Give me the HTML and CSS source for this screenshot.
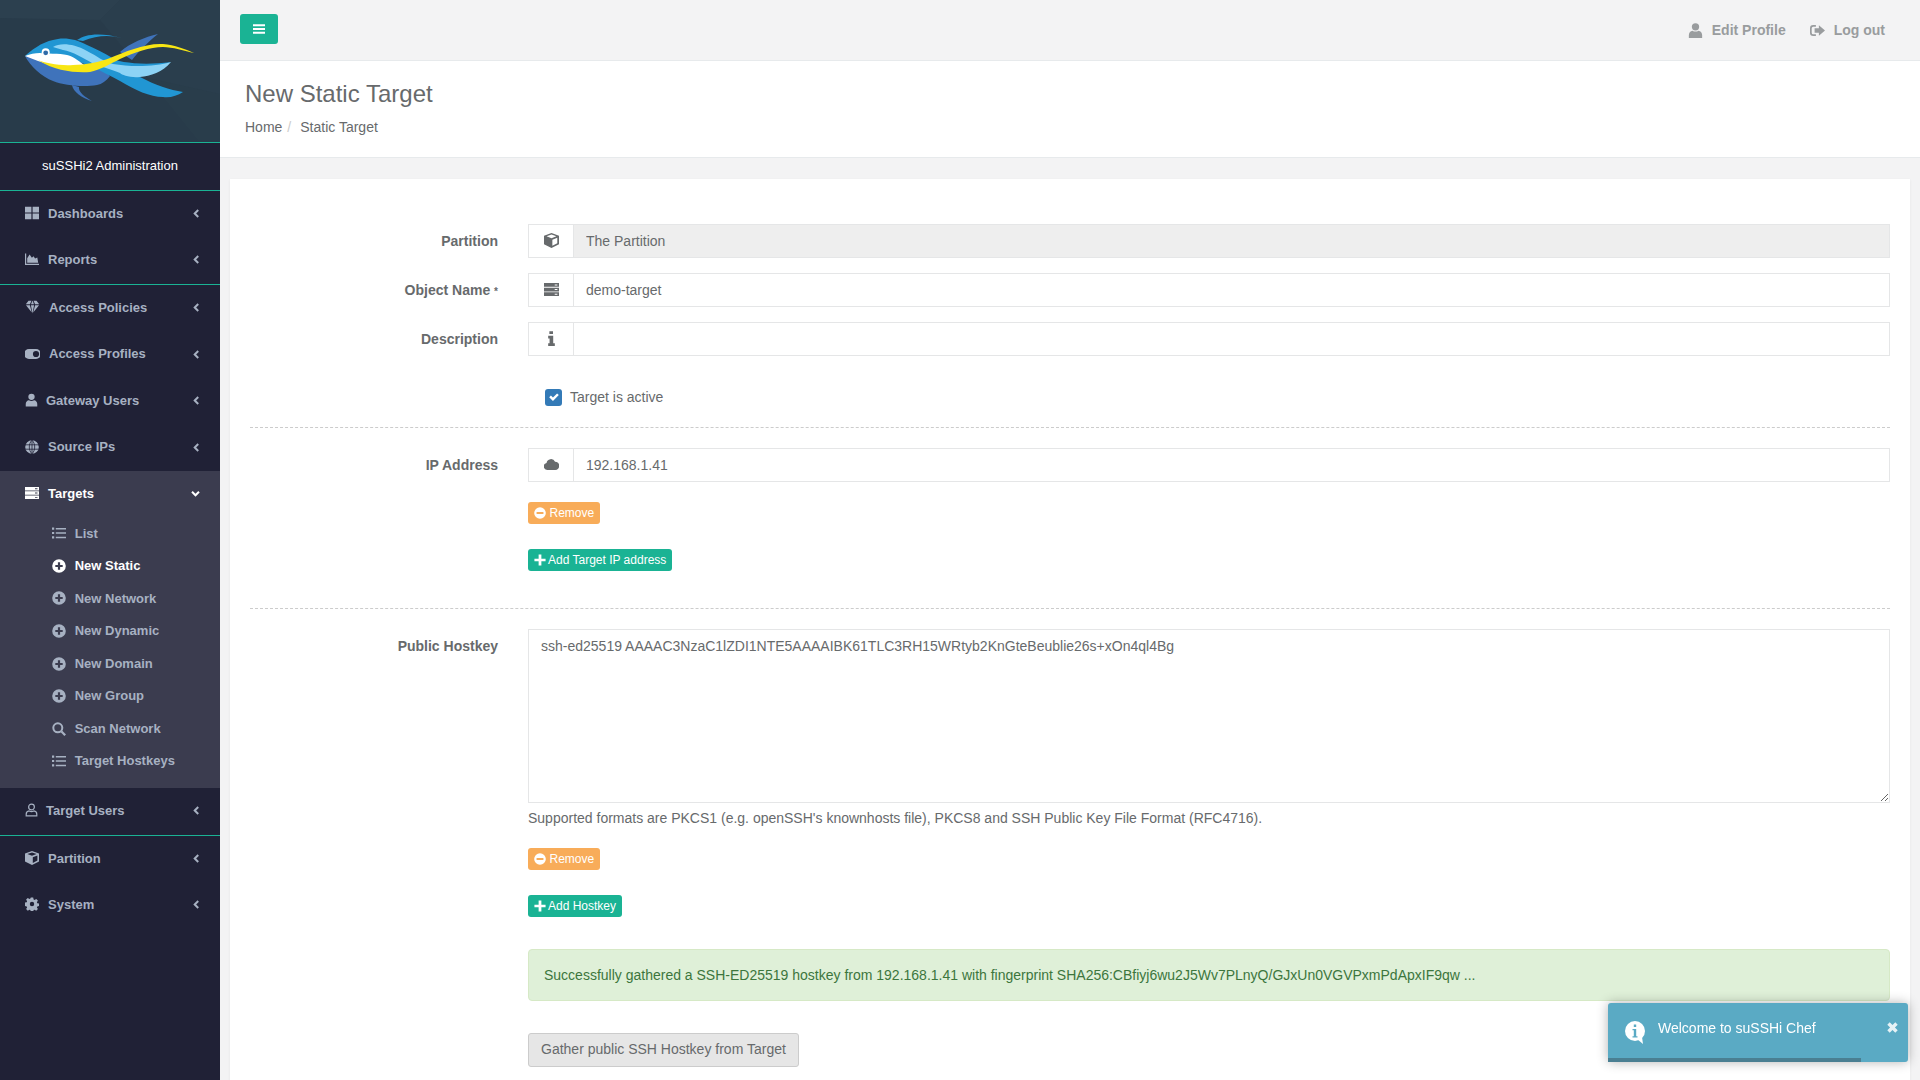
FILE: index.html
```html
<!DOCTYPE html>
<html lang="en">
<head>
    <meta charset="UTF-8">
    <title>New Static Target</title>
    <link rel="stylesheet" href="styles.css">
</head>
<body>
    <svg class="sprite" xmlns="http://www.w3.org/2000/svg">
        <symbol id="i-th" viewBox="0 0 14 14"><path d="M0 .8h6.400v5.800H0zM7.600 .8H14v5.800H7.600zM0 7.600h6.400v5.600H0zM7.600 7.600H14v5.600H7.600z"/></symbol>
        <symbol id="i-chart" viewBox="0 0 14 14"><path d="M0 1.500h1.200v10.300H14V13H0z"/><path d="M2.200 10.800V6.200L4.600 2.500l2.300 3.300 1.600-1.600 1.600 2.400 2.200-1.200.9 5.400z"/></symbol>
        <symbol id="i-diamond" viewBox="0 0 14 14"><path d="M3 .8h3L4.400 4.300H.3zM8 .8h3l2.700 3.500H9.600zM6.900 .8h.2l1.400 3.500h-3zM.5 5.200h3.900l1.900 7.400zM5.400 5.200h3.200L7 13.400zM9.600 5.200h3.900l-5.800 7.400z"/></symbol>
        <symbol id="i-toggle" viewBox="0 0 15 14"><path fill-rule="evenodd" d="M4 2h7a5 5 0 0 1 0 10H4A5 5 0 0 1 4 2zm7 1.900a3.100 3.100 0 1 0 0 6.200 3.100 3.100 0 0 0 0-6.200z"/></symbol>
        <symbol id="i-user" viewBox="0 0 14 14"><circle cx="7" cy="3.600" r="3.400"/><path d="M.8 14v-2.800C.8 9 2.400 7.400 4.200 7.200c1.700 1.100 3.900 1.100 5.600 0 1.800.2 3.400 1.800 3.400 4V14z"/></symbol>
        <symbol id="i-user-o" viewBox="0 0 14 14"><circle cx="7" cy="3.800" r="3.100" fill="none" stroke="currentColor" stroke-width="1.300"/><path d="M1.300 13.300v-1.700c0-2 1.500-3.400 3.200-3.600 1.500.8 3.500.8 5 0 1.700.2 3.200 1.600 3.200 3.600v1.700z" fill="none" stroke="currentColor" stroke-width="1.300"/></symbol>
        <symbol id="i-globe" viewBox="0 0 14 14"><path fill-rule="evenodd" d="M7 .2a6.800 6.800 0 1 1 0 13.600A6.800 6.800 0 0 1 7 .2z"/><path d="M7 .2v13.600M.2 4.800h13.600M.2 9.200h13.600M7 .2C3.400 3.700 3.400 10.300 7 13.800M7 .2c3.600 3.500 3.600 10.100 0 13.600" fill="none" stroke="#202136" stroke-width=".8"/></symbol>
        <symbol id="i-server" viewBox="0 0 14 14"><path fill-rule="evenodd" d="M0 1h14v3.500H0zM10 2.300v.9h2.500v-.9zM0 5.300h14v3.500H0zM10 6.600v.9h2.500v-.9zM0 9.600h14v3.500H0zM10 10.900v.9h2.500v-.9z"/></symbol>
        <symbol id="i-list" viewBox="0 0 14 14"><path d="M0 1.500h2.200v2.200H0zM0 5.900h2.200v2.200H0zM0 10.300h2.200v2.200H0zM3.800 1.900H14v1.500H3.800zM3.800 6.300H14v1.500H3.800zM3.800 10.700H14v1.500H3.800z"/></symbol>
        <symbol id="i-plus-c" viewBox="0 0 14 14"><path fill-rule="evenodd" d="M7 .2a6.800 6.800 0 1 1 0 13.600A6.800 6.800 0 0 1 7 .2zM5.900 3.300v2.600H3.300v2.200h2.600v2.600h2.200V8.100h2.600V5.900H8.100V3.300z"/></symbol>
        <symbol id="i-minus-c" viewBox="0 0 14 14"><path fill-rule="evenodd" d="M7 .2a6.800 6.800 0 1 1 0 13.600A6.800 6.800 0 0 1 7 .2zM3 5.900v2.200h8V5.900z"/></symbol>
        <symbol id="i-plus" viewBox="0 0 14 14"><path d="M5.400 .5h3.200v4.900h4.900v3.200H8.600v4.900H5.400V8.600H.5V5.400h4.900z"/></symbol>
        <symbol id="i-search" viewBox="0 0 14 14"><circle cx="5.800" cy="5.800" r="4.500" fill="none" stroke="currentColor" stroke-width="2"/><path d="M8.700 10.300l1.600-1.600 3.700 3.700-1.600 1.600z"/></symbol>
        <symbol id="i-cube" viewBox="0 0 14 14"><path fill-rule="evenodd" d="M7 0l7 2.500v8L7 14 0 10.500v-8zM2.400 3L7 4.800 11.600 3 7 1.400zM7.800 12l4.600-2.400V4.500L7.800 6.300z"/></symbol>
        <symbol id="i-cog" viewBox="0 0 14 14"><path fill-rule="evenodd" d="M5.800.6h2.400l.4 1.900 1 .4 1.600-1 1.700 1.700-1 1.600.4 1 1.900.4v2.400l-1.900.4-.4 1 1 1.600-1.700 1.700-1.600-1-1 .4-.4 1.900H5.800l-.4-1.900-1-.4-1.600 1-1.700-1.700 1-1.600-.4-1-1.900-.4V5.600l1.900-.4.4-1-1-1.600 1.700-1.700 1.600 1 1-.4zM7 4.800a2.200 2.200 0 1 0 0 4.400 2.200 2.200 0 0 0 0-4.400z"/></symbol>
        <symbol id="i-left" viewBox="0 0 8 12"><path d="M6 .4L7.900 2.300 4.200 6l3.700 3.700L6 11.600.4 6z"/></symbol>
        <symbol id="i-down" viewBox="0 0 12 8"><path d="M.4 2L2.300.1 6 3.800 9.700.1 11.600 2 6 7.600z"/></symbol>
        <symbol id="i-bars" viewBox="0 0 14 14"><path d="M1 2.300h12v1.900H1zM1 6.050h12v1.900H1zM1 9.800h12v1.900H1z"/></symbol>
        <symbol id="i-signout" viewBox="0 0 14 14"><path d="M5.500 1.800v1.700H3A1.400 1.400 0 0 0 1.600 4.900v4.200A1.400 1.400 0 0 0 3 10.500h2.500v1.700H3a3 3 0 0 1-3-3V4.800a3 3 0 0 1 3-3z"/><path d="M8.300 2L14 7l-5.700 5V9.200H4.300V4.800h4z"/></symbol>
        <symbol id="i-info" viewBox="0 0 14 14"><path d="M5 .3h3.400v2.600H5zM3.900 4.400h4.700v7.100h1.500V14H3.900v-2.500h1.300V6.900H3.900z"/></symbol>
        <symbol id="i-cloud" viewBox="0 0 16 14"><path d="M3.800 12.800A3.800 3.800 0 0 1 2.700 5.300 4.800 4.800 0 0 1 11.800 4 4.400 4.400 0 0 1 12 12.800z"/></symbol>
        <symbol id="i-check" viewBox="0 0 14 14"><path d="M1.400 7.200l2-2 2.400 2.400 4.800-4.800 2 2-6.800 6.800z"/></symbol>
        <symbol id="i-close" viewBox="0 0 11 11"><path d="M2.700.3l2.800 2.800L8.300.3l2.400 2.400-2.800 2.800 2.800 2.800-2.400 2.400-2.800-2.800-2.800 2.800L.3 8.300l2.800-2.800L.3 2.700z"/></symbol>
    </svg>

    <div class="layout">
        <aside class="sidebar">
            <div class="logo-box">
                <svg class="logo" viewBox="0 0 220 142" xmlns="http://www.w3.org/2000/svg">
                    <path d="M0 0h120L100 20 0 18z" fill="#2c404f"/>
                    <path d="M100 20L120 0h100v130l-22 10-50-62z" fill="#2a3e4d"/>
                    <path d="M148 78l50 62h22v-46z" fill="#293d4b"/>
                    <path d="M77 40C85 34 100 32 122 38 110 35 97 35 83 41z" fill="#2196d3"/>
                    <path d="M158 34C145 37 130 43 120 52L132 60C138 52 148 42 158 34z" fill="#3f73bb"/>
                    <path d="M72 85C73 92 82 98 92 101 85 97 78 92 79 87z" fill="#3f73bb"/>
                    <path d="M25 56C30 66 42 77 53 81 65 86 85 87 97 85 102 84 106 81 110 76L100 66 38 58z" fill="#3f73bb"/>
                    <path d="M25 56C30 51 42 42 53 40 62 37 75 38 87 45 103 52 120 61 140 77 155 85 170 90 183 92 177 96 170 98 163 97 150 97 135 90 120 81 110 76 100 70 90 66L60 55z" fill="#2196d3"/>
                    <path d="M108 58C120 62 140 66 171 62 150 72 130 70 113 65z" fill="#2196d3"/>
                    <path d="M53 47C60 43 72 43 87 51 97 56 104 62 113 64 130 67 155 67 171 62 163 72 150 76 140 77 130 78 122 75 120 73 112 70 100 66 92 63 85 59 72 51 63 50 60 49 56 48 53 47z" fill="#8dd3f5"/>
                    <path d="M25 56C30 54 35 53 40 53 45 54 60 53 67 55 72 56 78 60 84 65L84 68 60 68 38 61z" fill="#ffffff"/>
                    <path d="M38 60C45 63 60 66 73 65 85 65 100 62 110 58 125 52 145 43 163 44 175 45 185 49 194 53 185 51 172 47 163 47 150 47 135 52 120 59 110 64 100 70 90 72 75 73 55 71 38 60z" fill="#f8e614"/>
                    <circle cx="45.700" cy="52.300" r="4" fill="#ffffff"/>
                    <circle cx="45.700" cy="52.800" r="2.400" fill="#2f6aa8"/>
                </svg>
            </div>
            <div class="brand">suSSHi2 Administration</div>
            <ul class="nav">
                <li class="nav-item"><svg class="ic"><use href="#i-th"/></svg><span>Dashboards</span><svg class="arrow"><use href="#i-left"/></svg></li>
                <li class="nav-item"><svg class="ic"><use href="#i-chart"/></svg><span>Reports</span><svg class="arrow"><use href="#i-left"/></svg></li>
            </ul>
            <ul class="nav">
                <li class="nav-item"><svg class="ic ic-wide"><use href="#i-diamond"/></svg><span>Access Policies</span><svg class="arrow"><use href="#i-left"/></svg></li>
                <li class="nav-item"><svg class="ic ic-wide"><use href="#i-toggle"/></svg><span>Access Profiles</span><svg class="arrow"><use href="#i-left"/></svg></li>
                <li class="nav-item"><svg class="ic ic-narrow"><use href="#i-user"/></svg><span>Gateway Users</span><svg class="arrow"><use href="#i-left"/></svg></li>
                <li class="nav-item"><svg class="ic"><use href="#i-globe"/></svg><span>Source IPs</span><svg class="arrow"><use href="#i-left"/></svg></li>
                <li class="nav-group">
                    <div class="nav-item open"><svg class="ic"><use href="#i-server"/></svg><span>Targets</span><svg class="arrow-down"><use href="#i-down"/></svg></div>
                    <ul class="subnav">
                        <li><svg class="ic"><use href="#i-list"/></svg>List</li>
                        <li class="current"><svg class="ic"><use href="#i-plus-c"/></svg>New Static</li>
                        <li><svg class="ic"><use href="#i-plus-c"/></svg>New Network</li>
                        <li><svg class="ic"><use href="#i-plus-c"/></svg>New Dynamic</li>
                        <li><svg class="ic"><use href="#i-plus-c"/></svg>New Domain</li>
                        <li><svg class="ic"><use href="#i-plus-c"/></svg>New Group</li>
                        <li><svg class="ic"><use href="#i-search"/></svg>Scan Network</li>
                        <li><svg class="ic"><use href="#i-list"/></svg>Target Hostkeys</li>
                    </ul>
                </li>
                <li class="nav-item"><svg class="ic ic-narrow"><use href="#i-user-o"/></svg><span>Target Users</span><svg class="arrow"><use href="#i-left"/></svg></li>
            </ul>
            <ul class="nav">
                <li class="nav-item"><svg class="ic"><use href="#i-cube"/></svg><span>Partition</span><svg class="arrow"><use href="#i-left"/></svg></li>
                <li class="nav-item"><svg class="ic"><use href="#i-cog"/></svg><span>System</span><svg class="arrow"><use href="#i-left"/></svg></li>
            </ul>
        </aside>

        <main class="wrapper">
            <div class="topbar">
                <button class="menu-btn"><svg><use href="#i-bars"/></svg></button>
                <div class="top-links">
                    <a><svg><use href="#i-user"/></svg>Edit Profile</a>
                    <a><svg><use href="#i-signout"/></svg>Log out</a>
                </div>
            </div>
            <div class="page-heading">
                <h2>New Static Target</h2>
                <div class="breadcrumb"><span>Home</span><i>/</i><span>Static Target</span></div>
            </div>
            <div class="content">
                <form class="card">
                    <div class="row">
                        <label>Partition</label>
                        <div class="input-group">
                            <span class="addon"><svg><use href="#i-cube"/></svg></span>
                            <input type="text" value="The Partition" disabled>
                        </div>
                    </div>
                    <div class="row">
                        <label>Object Name <b class="req">*</b></label>
                        <div class="input-group">
                            <span class="addon"><svg><use href="#i-server"/></svg></span>
                            <input type="text" value="demo-target">
                        </div>
                    </div>
                    <div class="row">
                        <label>Description</label>
                        <div class="input-group">
                            <span class="addon"><svg><use href="#i-info"/></svg></span>
                            <input type="text">
                        </div>
                    </div>
                    <div class="check-row">
                        <span class="checkbox"><svg><use href="#i-check"/></svg></span>
                        Target is active
                    </div>
                    <div class="dashed"></div>
                    <div class="row">
                        <label>IP Address</label>
                        <div class="input-group">
                            <span class="addon"><svg><use href="#i-cloud"/></svg></span>
                            <input type="text" value="192.168.1.41">
                        </div>
                    </div>
                    <div class="field-actions">
                        <button type="button" class="btn-xs btn-warn"><svg><use href="#i-minus-c"/></svg>Remove</button>
                        <button type="button" class="btn-xs btn-add"><svg><use href="#i-plus"/></svg>Add Target IP address</button>
                    </div>
                    <div class="dashed dashed-2"></div>
                    <div class="row">
                        <label>Public Hostkey</label>
                        <div class="field-col">
                            <textarea>ssh-ed25519 AAAAC3NzaC1lZDI1NTE5AAAAIBK61TLC3RH15WRtyb2KnGteBeublie26s+xOn4ql4Bg</textarea>
                            <p class="help">Supported formats are PKCS1 (e.g. openSSH's knownhosts file), PKCS8 and SSH Public Key File Format (RFC4716).</p>
                            <div class="field-actions">
                                <button type="button" class="btn-xs btn-warn"><svg><use href="#i-minus-c"/></svg>Remove</button>
                                <button type="button" class="btn-xs btn-add"><svg><use href="#i-plus"/></svg>Add Hostkey</button>
                            </div>
                            <div class="alert">Successfully gathered a SSH-ED25519 hostkey from 192.168.1.41 with fingerprint SHA256:CBfiyj6wu2J5Wv7PLnyQ/GJxUn0VGVPxmPdApxIF9qw ...</div>
                            <button type="button" class="btn-gather">Gather public SSH Hostkey from Target</button>
                        </div>
                    </div>
                </form>
            </div>
        </main>
    </div>

    <div class="toast">
        <svg class="toast-icon" viewBox="0 0 20 23">
            <circle cx="10" cy="10" r="10" fill="#fff"/>
            <path d="M12 18l6 5-1-7z" fill="#fff"/>
            <path d="M8.800 3.500h2.400v2.400H8.800zM7.500 8h3.700v7.200h1.300v1.300h-5v-1.300h1.300V9.300H7.500z" fill="#5aaac4"/>
        </svg>
        <span>Welcome to suSSHi Chef</span>
        <svg class="toast-close"><use href="#i-close"/></svg>
        <div class="toast-progress"></div>
    </div>
</body>
</html>
```

FILE: styles.css
```css
html, body {
    height: 100%;
    overflow: hidden;
}

body {
    margin: 0;
    font-family: "Liberation Sans", Arial, sans-serif;
    font-size: 14px;
    line-height: 1.42857;
    color: #676a6c;
    background: #f3f3f4;
}

.sprite {
    display: none;
}

ul {
    list-style: none;
    margin: 0;
    padding: 0;
}

svg {
    fill: currentColor;
}

.layout {
    display: flex;
    height: 100%;
}

/* sidebar */
.sidebar {
    flex: 0 0 220px;
    background: #202136;
    color: #a7b1c2;
    font-size: 13px;
    font-weight: 700;
}

.logo-box {
    height: 142px;
    background: #283b4a;
}

.logo {
    display: block;
    width: 220px;
    height: 142px;
}

.brand {
    height: 48.6px;
    line-height: 45px;
    border-top: 1px solid #1ab394;
    border-bottom: 1px solid #1ab394;
    box-sizing: border-box;
    text-align: center;
    color: #fff;
    font-weight: 400;
}

.nav {
    border-bottom: 1px solid #1ab394;
}

.nav:last-child {
    border-bottom: none;
}

.nav-item {
    display: flex;
    align-items: center;
    padding: 14px 21px 14px 25px;
    height: 18.57px;
}

.nav-item span {
    flex: 1;
}

.nav-item .ic {
    width: 14px;
    height: 14px;
    margin: -2px 9px 0 0;
}

.nav-item .ic-wide {
    width: 15px;
}

.nav-item .ic-narrow {
    width: 13px;
    margin-right: 8px;
}

.arrow {
    width: 6px;
    height: 9px;
    margin-top: -1px;
}

.arrow-down {
    width: 9px;
    height: 6px;
    margin: -1px -1px 0 0;
}

.nav-group {
    background: #3b3c4f;
}

.nav-item.open {
    color: #fff;
}

.subnav {
    padding-bottom: 10px;
}

.subnav li {
    display: flex;
    align-items: center;
    padding: 7px 10px 7px 52px;
    height: 18.57px;
}

.subnav .ic {
    width: 14px;
    height: 14px;
    margin: -1px 8.7px 0 0;
}

.subnav .current {
    color: #fff;
}

/* main column */
.wrapper {
    flex: 1;
    min-width: 0;
}

.topbar {
    display: flex;
    align-items: center;
    justify-content: space-between;
    height: 60px;
    padding: 0 35px 0 20px;
    border-bottom: 1px solid #e7eaec;
}

.menu-btn {
    display: flex;
    align-items: center;
    justify-content: center;
    width: 38px;
    height: 30px;
    margin-bottom: 2px;
    padding: 0;
    border: none;
    border-radius: 3px;
    background: #1ab394;
    color: #fff;
}

.menu-btn svg {
    width: 14px;
    height: 14px;
}

.top-links {
    display: flex;
    gap: 24px;
    padding-top: 1px;
    font-weight: 700;
    color: #999c9e;
}

.top-links a {
    display: flex;
    align-items: center;
    gap: 9px;
}

.top-links svg {
    width: 15px;
    height: 15px;
}

.page-heading {
    height: 97px;
    padding: 0 25px;
    background: #fff;
    border-bottom: 1px solid #e7eaec;
    box-sizing: border-box;
}

.page-heading h2 {
    margin: 0;
    padding-top: 19px;
    font-size: 24px;
    font-weight: 400;
    line-height: 28px;
}

.breadcrumb {
    display: flex;
    margin-top: 10px;
}

.breadcrumb i {
    margin: 0 9px 0 5px;
    font-style: normal;
    color: #ccc;
}

.content {
    padding: 21px 10px 0;
}

.card {
    padding: 45px 20px 20px;
    background: #fff;
    box-shadow: 0 1px 3px rgba(0, 0, 0, 0.06);
}

.row {
    display: grid;
    grid-template-columns: 248px 1fr;
    column-gap: 30px;
    margin-bottom: 15px;
}

.row label {
    padding-top: 8px;
    text-align: right;
    font-weight: 700;
}

.req {
    font-size: 10px;
}

.input-group {
    display: flex;
    height: 34px;
}

.addon {
    display: flex;
    flex: 0 0 45px;
    align-items: center;
    justify-content: center;
    box-sizing: border-box;
    border: 1px solid #e5e6e7;
    border-right: none;
}

.addon svg {
    width: 15px;
    height: 15px;
    margin-top: -1px;
}

input[type="text"], textarea {
    flex: 1;
    min-width: 0;
    box-sizing: border-box;
    padding: 7px 12px 5px;
    border: 1px solid #e5e6e7;
    font: inherit;
    color: inherit;
    background: #fff;
    outline: none;
}

input[disabled] {
    background: #eee;
}

.check-row {
    display: flex;
    align-items: center;
    gap: 8px;
    height: 20px;
    margin: 32px 0 0 295px;
}

.checkbox {
    display: flex;
    align-items: center;
    justify-content: center;
    width: 17px;
    height: 17px;
    margin-top: -2px;
    border-radius: 3px;
    background: #337ab7;
    color: #fff;
}

.checkbox svg {
    width: 12px;
    height: 12px;
}

.dashed {
    margin: 19px 0 20px;
    border-top: 1px dashed #ccc;
}

.dashed-2 {
    margin-top: 37px;
}

.field-actions {
    display: flex;
    flex-direction: column;
    align-items: flex-start;
    gap: 25px;
    margin: 20px 0 0 278px;
}

.field-col .field-actions {
    margin: 19px 0 0;
}

.btn-xs {
    display: flex;
    align-items: center;
    height: 22px;
    padding: 0 6px;
    border: none;
    border-radius: 3px;
    color: #fff;
    font: inherit;
    font-size: 12px;
    line-height: 22px;
}

.btn-xs svg {
    width: 12px;
    height: 12px;
}

.btn-warn {
    gap: 3.5px;
    background: #f8ac59;
}

.btn-add {
    gap: 2px;
    background: #1ab394;
}

.field-col {
    min-width: 0;
}

.field-col textarea {
    display: block;
    width: 100%;
    height: 174px;
}

.help {
    margin: 6px 0 0;
}

.alert {
    margin-top: 32px;
    padding: 16px 15px 14px;
    border: 1px solid #d6e9c6;
    border-radius: 4px;
    height: 52px;
    box-sizing: border-box;
    background: #dff0d8;
    color: #3c763d;
}

.btn-gather {
    display: block;
    margin-top: 32px;
    height: 34px;
    padding: 1px 12px 0;
    border: 1px solid #ccc;
    border-radius: 3px;
    background: #e6e6e6;
    font: inherit;
    color: #676a6c;
}

/* toast over the page */
.toast {
    position: fixed;
    left: 1608px;
    top: 1003px;
    display: flex;
    gap: 13px;
    box-sizing: border-box;
    width: 300px;
    height: 59px;
    padding: 16px 17px;
    border-radius: 3px;
    background: #5aaac4;
    box-shadow: 0 0 12px rgba(0, 0, 0, 0.3);
    color: #fff;
    font-size: 14px;
}

.toast-icon {
    flex: 0 0 20px;
    width: 20px;
    height: 23px;
    margin-top: 2px;
}

.toast-close {
    position: absolute;
    top: 19px;
    right: 10px;
    width: 11px;
    height: 11px;
    opacity: 0.85;
}

.toast-progress {
    position: absolute;
    left: 0;
    bottom: 0;
    width: 253px;
    height: 4px;
    background: #4a7f92;
}
```
